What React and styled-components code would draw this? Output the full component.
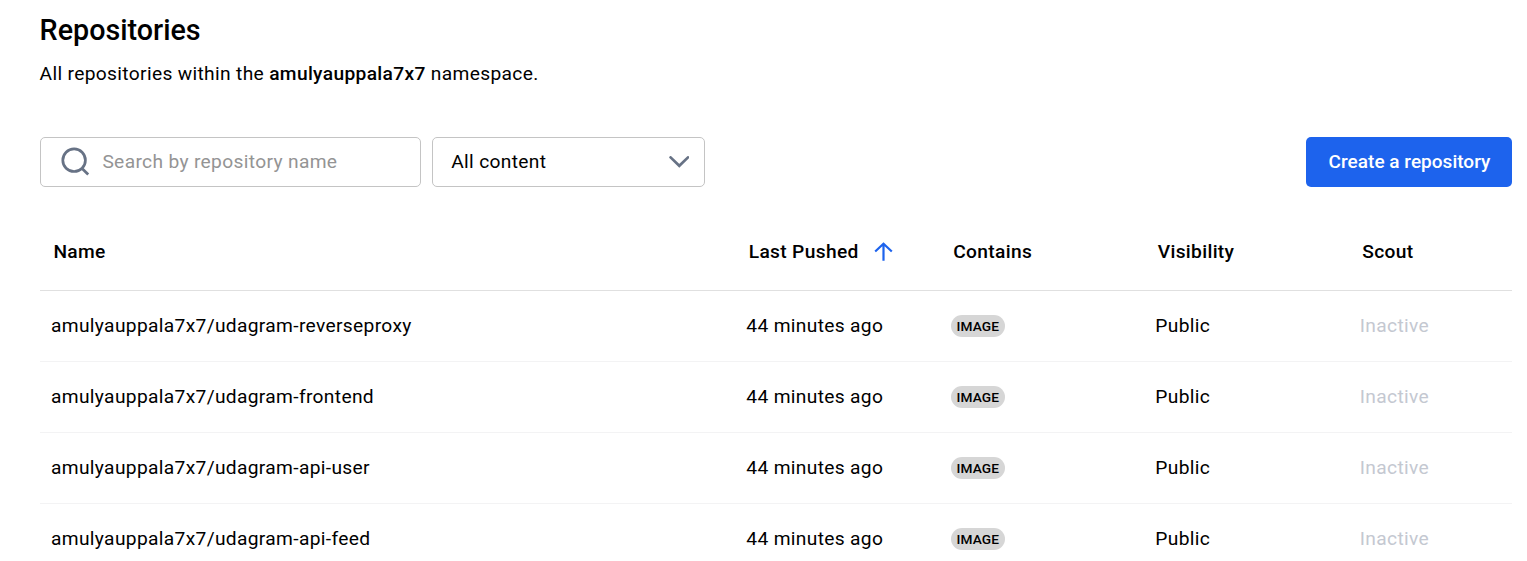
import React from "react";
import styled, { createGlobalStyle } from "styled-components";

const GlobalStyle = createGlobalStyle`
  * { box-sizing: border-box; }
  body {
    margin: 0;
    background: #fff;
    color: #000;
    font-family: Roboto, "Liberation Sans", sans-serif;
    font-size: 19.2px;
    letter-spacing: 0.335px;
    overflow: hidden;
  }
`;

const Page = styled.main`
  height: 561px;
  overflow: hidden;
  padding: 12px 15px 0 40px;
`;

const Title = styled.h1`
  margin: 0 0 0 -0.4px;
  font-size: 28.7px;
  line-height: 36px;
  font-weight: 500;
  letter-spacing: 0;
`;

const Subtitle = styled.p`
  margin: 12px 0 0 -0.4px;
  line-height: 28px;

  strong { font-weight: 500; }
`;

const Toolbar = styled.div`
  display: flex;
  align-items: center;
  margin-top: 49px;
  height: 50px;
`;

const Field = styled.div`
  display: flex;
  align-items: center;
  width: ${(p) => p.$width}px;
  height: 50px;
  padding: ${(p) => p.$padding};
  margin-right: 11px;
  border: 1px solid #c4c4c4;
  border-radius: 5px;
  justify-content: ${(p) => p.$justify || "flex-start"};
  color: ${(p) => p.$color || "#000"};

  svg { flex: none; display: block; }
`;

const FieldText = styled.span`
  margin-left: ${(p) => p.$gap || 0}px;
  line-height: 24px;
`;

const CreateButton = styled.button`
  margin-left: auto;
  width: 206px;
  height: 50px;
  padding: 0 0 2px 1px;
  border: 0;
  border-radius: 5px;
  background: #1d63ed;
  color: #fff;
  font: 500 19px Roboto, sans-serif;
  letter-spacing: 0.02px;
`;

const Table = styled.div`
  margin-top: 25px;
`;

const Row = styled.div`
  display: grid;
  grid-template-columns: 695.3px 204.5px 204.5px 204.5px 1fr;
  align-items: center;
  height: ${(p) => (p.$head ? 79 : 71)}px;
  padding-left: ${(p) => (p.$head ? 13.4 : 11)}px;
  padding-top: ${(p) => (p.$head ? 2 : 0)}px;
  border-bottom: 1px solid ${(p) => (p.$head ? "#e0e0e0" : "#f3f3f4")};
  font-weight: ${(p) => (p.$head ? 500 : 400)};
`;

const Cell = styled.div`
  display: flex;
  align-items: center;
  line-height: 28px;
  color: ${(p) => (p.$muted ? "#c4c8d1" : "inherit")};

  svg { margin-left: 15px; }
`;

const Badge = styled.span`
  display: inline-flex;
  align-items: center;
  justify-content: center;
  width: 54px;
  height: 22px;
  border-radius: 11px;
  background: #d6d6d6;
  font-size: 13.7px;
  line-height: 22px;
  font-weight: 500;
  letter-spacing: 0.14px;
`;

const SearchIcon = () => (
  <svg width="30" height="30" viewBox="0 0 30 30" fill="none" stroke="#677285" strokeWidth="2.7">
    <circle cx="14.1" cy="13.2" r="11.3" />
    <path d="M21.8 21.2 28.2 27.5" />
  </svg>
);

const ChevronIcon = () => (
  <svg width="20" height="12" viewBox="0 0 20 12" fill="none" stroke="#677285" strokeWidth="2.7">
    <path d="M1.6 1.4 10.3 9.8 19 1.4" strokeLinecap="round" />
  </svg>
);

const ArrowIcon = () => (
  <svg width="20" height="20" viewBox="0 0 20 20" fill="none" stroke="#1d63ed" strokeWidth="2.2">
    <path d="M9.5 18.8V2M1.2 9.5 9.5 1.8l8.3 7.7" />
  </svg>
);

const repositories = ["reverseproxy", "frontend", "api-user", "api-feed"];

export default function App() {
  return (
    <Page>
      <GlobalStyle />
      <Title>Repositories</Title>
      <Subtitle>
        All repositories within the <strong>amulyauppala7x7</strong> namespace.
      </Subtitle>
      <Toolbar>
        <Field $width={381} $padding="0 19px" $color="#949494">
          <SearchIcon />
          <FieldText $gap={12.4}>Search by repository name</FieldText>
        </Field>
        <Field $width={273} $padding="0 14.6px 0 18.2px" $justify="space-between">
          <FieldText>All content</FieldText>
          <ChevronIcon />
        </Field>
        <CreateButton>Create a repository</CreateButton>
      </Toolbar>
      <Table>
        <Row $head>
          <Cell>Name</Cell>
          <Cell>
            Last Pushed
            <ArrowIcon />
          </Cell>
          <Cell>Contains</Cell>
          <Cell>Visibility</Cell>
          <Cell>Scout</Cell>
        </Row>
        {repositories.map((name) => (
          <Row key={name}>
            <Cell>amulyauppala7x7/udagram-{name}</Cell>
            <Cell>44 minutes ago</Cell>
            <Cell>
              <Badge>IMAGE</Badge>
            </Cell>
            <Cell>Public</Cell>
            <Cell $muted>Inactive</Cell>
          </Row>
        ))}
      </Table>
    </Page>
  );
}
